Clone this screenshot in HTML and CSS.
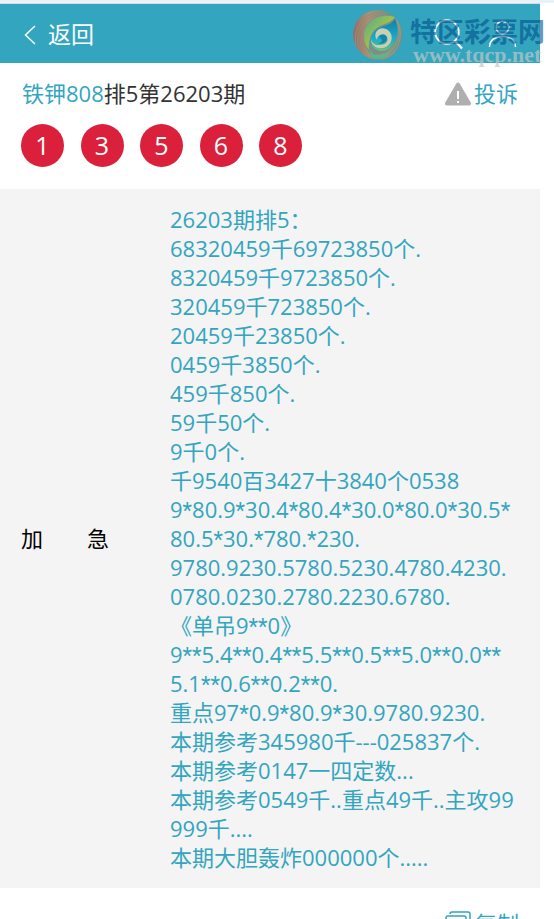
FILE: index.html
```html
<!DOCTYPE html>
<html lang="zh-CN">
<head>
<meta charset="utf-8">
<meta name="viewport" content="width=device-width, initial-scale=1">
<title>铁钾808排5第26203期</title>
<link rel="stylesheet" href="styles.css">
</head>
<body>
<div class="page">
  <header class="topbar">
    <a class="back" href="#">
      <svg width="12" height="20" viewBox="0 0 12 20" aria-hidden="true"><path d="M11 1 1.500 10 11 19" fill="none" stroke="#fff" stroke-width="1.500"/></svg>
      <span>返回</span>
    </a>
    <nav class="tools">
      <a href="#" aria-label="搜索">
        <svg width="30" height="32" viewBox="0 0 30 32"><g fill="none" stroke="#fff" stroke-width="1.800"><circle cx="13" cy="14" r="11.800"/><path d="m21 23 7 7.500" stroke-width="2.200"/></g></svg>
      </a>
      <a href="#" aria-label="我的">
        <svg width="30" height="32" viewBox="0 0 30 32"><g fill="none" stroke="#fff" stroke-width="1.500"><circle cx="14.500" cy="9.500" r="6.300"/><path d="M1.500 29C1.500 14.500 27.500 14.500 27.500 29"/></g></svg>
      </a>
    </nav>
    <div class="mark">
      <svg class="swirl" width="52" height="52" viewBox="0 0 52 52" aria-hidden="true">
        <defs>
          <linearGradient id="rim" x1="0" y1="0.500" x2="1" y2="0.500"><stop offset="0" stop-color="#906f68"/><stop offset=".4" stop-color="#a99372"/><stop offset="1" stop-color="#5f9390"/></linearGradient>
          <linearGradient id="lime" x1="0" y1="0" x2="1" y2="1"><stop offset="0" stop-color="#45ae9c"/><stop offset=".5" stop-color="#a1bf4a"/><stop offset="1" stop-color="#3b9a8a"/></linearGradient>
          <linearGradient id="sea" x1="0" y1="0" x2="0" y2="1"><stop offset="0" stop-color="#157da5"/><stop offset=".6" stop-color="#12aed1"/><stop offset="1" stop-color="#73bd78"/></linearGradient>
        </defs>
        <circle cx="26" cy="26" r="24.500" fill="#76918a"/>
        <path d="M28 1C8 0-2 18 2 32c3 10 12 18 24 19-10-6-15-15-13-25C15 14 23 6 40 6 36 3 32 1 28 1Z" fill="url(#rim)"/>
        <path d="M4 37C1 21 9 7 25 3M7 41C2 22 13 7 31 3M12 46C4 29 12 9 35 4" fill="none" stroke="#a08878" stroke-width="1"/>
        <path d="M43 8C27 3 12 13 12 27c0 6 2 10 5 14-1-12 3-21 13-25 6-2 10-4 13-8Z" fill="url(#lime)"/>
        <path d="M43 10c-4 6-9 6-14 8-7 3-11 9-10 16 2 9 15 11 21 3 5-7 8-17 3-27Z" fill="url(#sea)"/>
        <path d="M44 9c11 15 6 36-11 41-7 2-14-2-17-9 7 6 18 5 24-3 6-9 8-19 4-29Z" fill="url(#rim)"/>
        <path d="M17 39c4 10 16 9 24 0-4 8-10 11-16 11-5-1-8-5-8-11Z" fill="#52b990"/>
        <path d="M26 36c8 1 12-5 8-9-3-3-9-1-9 4-5-7 2-14 9-11 9 4 7 17-3 19-7 1-12-3-12-9 1 4 4 6 7 6Z" fill="#c9d0b1"/>
        <path d="M27 28c2-4 8-3 8 1s-5 7-9 5c4 0 6-3 1-6Z" fill="#1784a5"/>
        <path d="M44 10c8 12 5 31-9 38M45 13c5 12 1 25-11 32" fill="none" stroke="#9a9c86" stroke-width="1"/>
      </svg>
      <div class="mark-text">
        <span class="mark-name">特区彩票网</span>
        <span class="mark-url">www.tqcp.net</span>
      </div>
    </div>
  </header>

  <main>
    <section class="summary">
      <div class="title-row">
        <h1><a href="#">铁钾808</a>排5第26203期</h1>
        <a class="report" href="#">
          <svg width="28" height="24" viewBox="0 0 28 24" aria-hidden="true"><path d="M12.300 1.500Q14 -.5 15.700 1.500L27 21Q27.500 23.500 25 23.500H3Q.5 23.500 1 21Z" fill="#afafaf"/><path d="M14 9v8M14 19v2" stroke="#fff" stroke-width="2"/></svg>
          <span>投诉</span>
        </a>
      </div>
      <ul class="balls"><li>1</li><li>3</li><li>5</li><li>6</li><li>8</li></ul>
    </section>

    <section class="entry">
      <h2 class="label"><span>加</span><span>急</span></h2>
      <p class="content">26203期排5：<br>
68320459千69723850个.<br>
8320459千9723850个.<br>
320459千723850个.<br>
20459千23850个.<br>
0459千3850个.<br>
459千850个.<br>
59千50个.<br>
9千0个.<br>
千9540百3427十3840个0538<br>
9<i>*</i>80.9<i>*</i>30.4<i>*</i>80.4<i>*</i>30.0<i>*</i>80.0<i>*</i>30.5<i>*</i><br>
80.5<i>*</i>30.<i>*</i>780.<i>*</i>230.<br>
9780.9230.5780.5230.4780.4230.<br>
0780.0230.2780.2230.6780.<br>
《单吊9<i>**</i>0》<br>
9<i>**</i>5.4<i>**</i>0.4<i>**</i>5.5<i>**</i>0.5<i>**</i>5.0<i>**</i>0.0<i>**</i><br>
5.1<i>**</i>0.6<i>**</i>0.2<i>**</i>0.<br>
重点97<i>*</i>0.9<i>*</i>80.9<i>*</i>30.9780.9230.<br>
本期参考345980千---025837个.<br>
本期参考0147一四定数...<br>
本期参考0549千..重点49千..主攻99<br>
999千....<br>
本期大胆轰炸000000个.....</p>
    </section>

    <div class="actions">
      <button class="copy" type="button">
        <svg width="26" height="26" viewBox="0 0 26 26" aria-hidden="true"><g fill="none" stroke="#33a5bf" stroke-width="1.500"><path d="M5 3Q5 1 7 1h16q2 0 2 2v14q0 2-2 2"/><rect x="1" y="5" width="20" height="19" rx="2"/></g></svg>
        <span>复制</span>
      </button>
    </div>
  </main>
</div>
</body>
</html>
```
FILE: styles.css
```css
* {
  box-sizing: border-box;
}

body {
  margin: 0;
  height: 100vh;
  overflow: hidden;
  background: #fff;
  color: #333;
  font: 22px/29px "Open Sans", "Noto Sans CJK SC", sans-serif;
}

a {
  color: #33a5bf;
  text-decoration: none;
}

h1,
h2,
p,
ul {
  margin: 0;
  padding: 0;
  font-size: inherit;
  font-weight: 400;
}

.page {
  border-top: 3px solid #e9f1f9;
}

.topbar,
main {
  margin-right: 14px;
}

.topbar {
  position: relative;
  display: flex;
  align-items: center;
  justify-content: space-between;
  height: 60px;
  padding: 0 22px 0 24px;
  border-top: 1px solid #d5dde2;
  background: #33a5bf;
}

.back {
  display: flex;
  align-items: center;
  gap: 12px;
  padding-top: 2px;
  color: #fff;
  font-size: 23px;
}

.tools {
  display: flex;
  gap: 24px;
}

.tools svg {
  display: block;
}

.mark {
  position: absolute;
  top: 5px;
  right: -5px;
  display: flex;
  gap: 6px;
  pointer-events: none;
}

.mark-text {
  display: flex;
  flex-direction: column;
  padding-top: 7px;
  white-space: nowrap;
}

.mark-name {
  color: rgba(0, 80, 140, 0.6);
  font: 700 27px/30px "Noto Sans CJK SC", sans-serif;
}

.mark-url {
  margin-left: 3px;
  color: rgba(190, 200, 200, 0.7);
  font: 700 22px/18px "Liberation Serif", serif;
}

.summary {
  padding: 16px 22px 22px;
}

.title-row {
  display: flex;
  align-items: center;
  justify-content: space-between;
}

.report {
  display: flex;
  align-items: center;
  gap: 2px;
}

.balls {
  display: flex;
  justify-content: space-between;
  max-width: 281px;
  margin: 16px 0 0 -1px;
  list-style: none;
}

.balls li {
  width: 43px;
  height: 43px;
  border-radius: 50%;
  background: #db203b;
  color: #fff;
  font-size: 25px;
  line-height: 43px;
  text-align: center;
}

.entry {
  display: grid;
  grid-template-columns: 88px 1fr;
  column-gap: 61px;
  align-items: center;
  padding: 16px 21px;
  background: #f4f4f4;
}

.label {
  display: flex;
  justify-content: space-between;
  color: #000;
}

.content {
  color: #33a5bf;
  white-space: nowrap;
}

/* Narrow asterisks keep the long number rows inside the column */
.content i {
  font-family: Roboto, sans-serif;
  font-style: normal;
  line-height: 1;
}

.actions {
  display: flex;
  justify-content: flex-end;
  padding: 21px;
}

.copy {
  display: flex;
  align-items: center;
  gap: 4px;
  padding: 0;
  border: 0;
  background: none;
  color: #33a5bf;
  font: inherit;
}
```
